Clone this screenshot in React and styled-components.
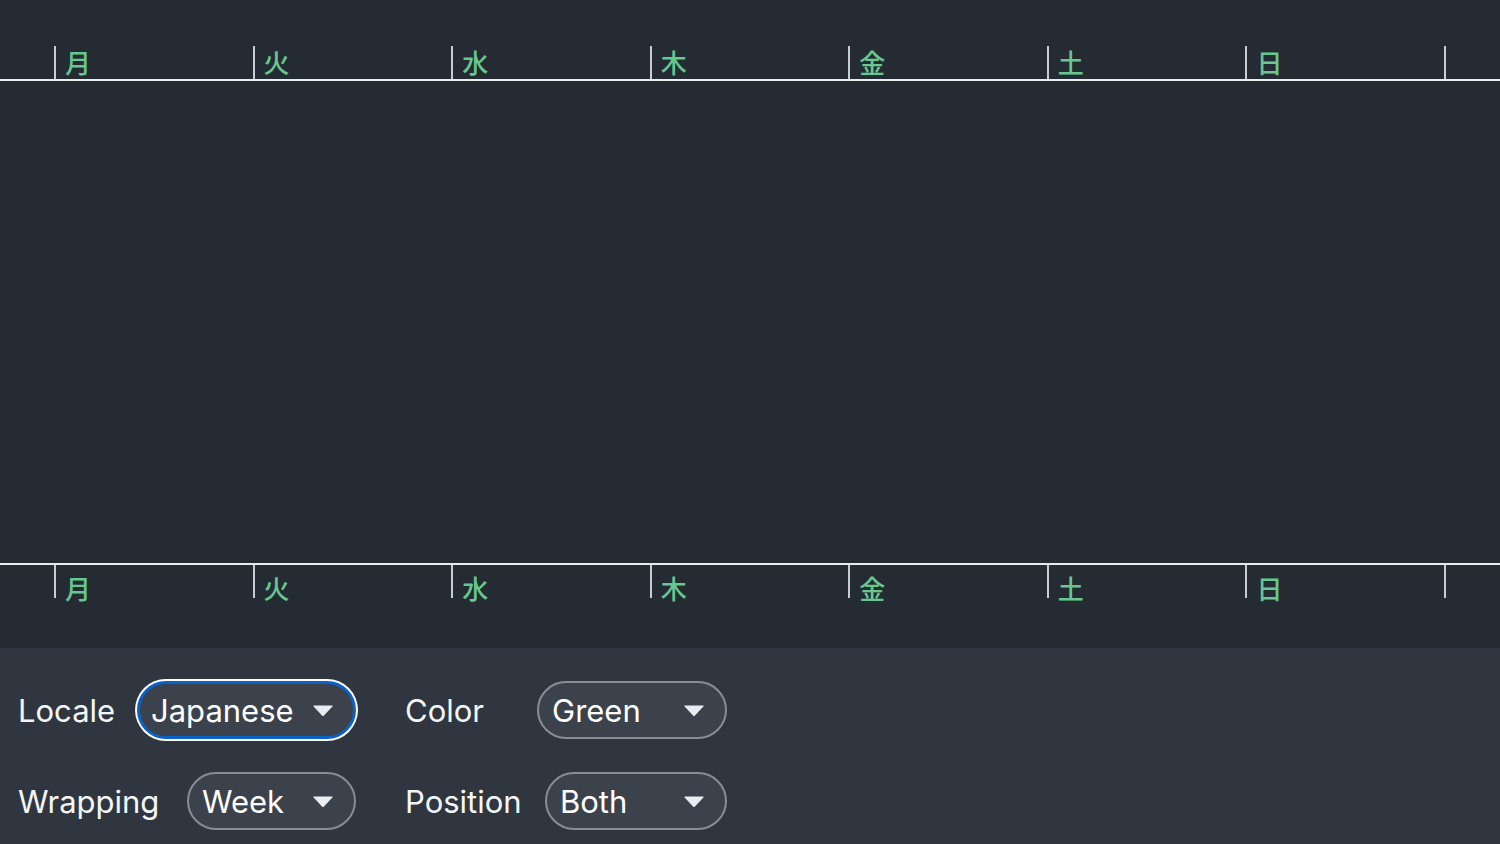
import React from 'react'
import styled, { createGlobalStyle, css } from 'styled-components'

const days = ['月', '火', '水', '木', '金', '土', '日']

const GlobalStyle = createGlobalStyle`
  html, body {
    margin: 0;
    padding: 0;
    background: #252b33;
  }
  body {
    font-family: Inter, "Noto Sans", "Liberation Sans", sans-serif;
    color: #f4f6f8;
  }
`

const Page = styled.div`
  width: 1500px;
  height: 844px;
  display: flex;
  flex-direction: column;
  overflow: hidden;
`

const Chart = styled.div`
  height: 648px;
  padding-top: 46px;
  box-sizing: border-box;
  display: flex;
  flex-direction: column;
`

const Axis = styled.div`
  display: flex;
  padding-left: 54px;
  ${({ position }) =>
    position === 'top'
      ? css`border-bottom: 2px solid #e9ecef;`
      : css`border-top: 2px solid #e9ecef;`}
`

const Tick = styled.div`
  width: 198.57px;
  height: 33px;
  box-sizing: border-box;
  border-left: 2px solid #c9cdd2;
  display: flex;
  padding-left: 9px;
  font-family: "Noto Sans CJK JP", "Noto Sans", sans-serif;
  font-size: 26px;
  font-weight: 500;
  line-height: 1;
  color: #66c88f;
  ${({ position }) =>
    position === 'top'
      ? css`align-items: flex-start; padding-top: 3px;`
      : css`align-items: flex-start; padding-top: 10px;`}
  ${({ last }) => last && css`width: 2px; padding: 0;`}
`

const Plot = styled.div`
  height: 482px;
`

const Panel = styled.div`
  flex: 1;
  background: #2f3640;
  padding: 33px 18px 0;
  display: flex;
  flex-direction: column;
  gap: 33px;
`

const Row = styled.div`
  display: flex;
  gap: 49px;
`

const Field = styled.label`
  width: ${({ width }) => width}px;
  display: flex;
  align-items: center;
  justify-content: space-between;
  font-size: 31px;
  color: #f4f6f8;
`

const Select = styled.button`
  width: ${({ width }) => width}px;
  height: 58px;
  box-sizing: border-box;
  border-radius: 29px;
  border: 2px solid #868d96;
  background: #3b424c;
  color: #ffffff;
  font-family: inherit;
  font-size: 31px;
  padding: 0 20px 0 13px;
  display: flex;
  align-items: center;
  justify-content: space-between;
  cursor: pointer;
  ${({ focused }) =>
    focused &&
    css`
      border: 3px solid #0a62c8;
      padding-left: 11px;
      padding-right: 19px;
      box-shadow: 0 0 0 2px #ffffff;
    `}
`

const Caret = () => (
  <svg width="22" height="13" viewBox="0 0 22 13">
    <path d="M2 1.5 L20 1.5 Q21.2 1.5 20.4 2.5 L12 11.6 Q11 12.6 10 11.6 L1.6 2.5 Q0.8 1.5 2 1.5 Z" fill="#e9ecf0" />
  </svg>
)

const AxisRow = ({ position }) => (
  <Axis position={position}>
    {days.map((d) => (
      <Tick key={d} position={position}>{d}</Tick>
    ))}
    <Tick last position={position} />
  </Axis>
)

const Dropdown = ({ label, value, width, selectWidth, focused }) => (
  <Field width={width}>
    {label}
    <Select width={selectWidth} focused={focused}>
      {value}
      <Caret />
    </Select>
  </Field>
)

const App = () => (
  <Page>
    <GlobalStyle />
    <Chart>
      <AxisRow position="top" />
      <Plot />
      <AxisRow position="bottom" />
    </Chart>
    <Panel>
      <Row>
        <Dropdown label="Locale" value="Japanese" width={338} selectWidth={219} focused />
        <Dropdown label="Color" value="Green" width={322} selectWidth={190} />
      </Row>
      <Row>
        <Dropdown label="Wrapping" value="Week" width={338} selectWidth={169} />
        <Dropdown label="Position" value="Both" width={322} selectWidth={182} />
      </Row>
    </Panel>
  </Page>
)

export default App
